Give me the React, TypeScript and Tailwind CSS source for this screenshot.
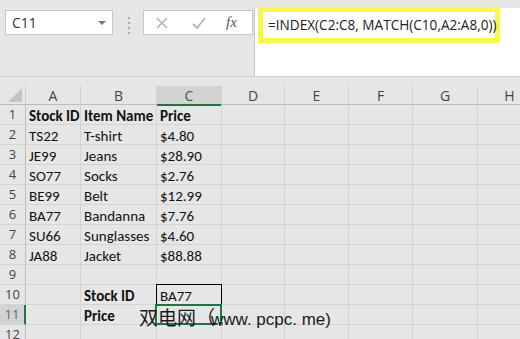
import React from "react";

const COLS = [
  { key: "A", w: "w-[55px]" },
  { key: "B", w: "w-[76px]" },
  { key: "C", w: "w-[65px]" },
  { key: "D", w: "w-[63px]" },
  { key: "E", w: "w-[64px]" },
  { key: "F", w: "w-[64px]" },
  { key: "G", w: "w-[65px]" },
  { key: "H", w: "w-[64px]" },
];

type Row = { a?: string; b?: string; c?: string; bold?: boolean; boldB?: boolean };

const ROWS: Row[] = [
  { a: "Stock ID", b: "Item Name", c: "Price", bold: true },
  { a: "TS22", b: "T-shirt", c: "$4.80" },
  { a: "JE99", b: "Jeans", c: "$28.90" },
  { a: "SO77", b: "Socks", c: "$2.76" },
  { a: "BE99", b: "Belt", c: "$12.99" },
  { a: "BA77", b: "Bandanna", c: "$7.76" },
  { a: "SU66", b: "Sunglasses", c: "$4.60" },
  { a: "JA88", b: "Jacket", c: "$88.88" },
  {},
  { b: "Stock ID", c: "BA77", boldB: true },
  { b: "Price", boldB: true },
  {},
];

const cellFont = "font-['Carlito','Lato',sans-serif] text-[15px]";

function Cell({ w, text, bold, extra }: { w: string; text?: string; bold?: boolean; extra?: React.ReactNode }) {
  return (
    <div
      className={`${w} h-[20px] shrink-0 relative border-r border-b border-[#d4d4d4] pl-[3px] pt-[1px] leading-[20px] whitespace-nowrap text-[#111] ${cellFont} ${bold ? "font-bold" : ""}`}
    >
      {text}
      {extra}
    </div>
  );
}

export default function App() {
  return (
    <div className="w-[520px] h-[339px] overflow-hidden bg-[#e6e6e6] relative">
      {/* formula bar area */}
      <div className="h-[77px] flex items-start border-b border-[#d0d0d0]">
        <div className="ml-[5px] mt-[10px] w-[108px] h-[25px] bg-white border border-[#c6c6c6] flex items-center justify-between pl-[6px] pr-[6px]">
          <span className="font-['Open_Sans',sans-serif] text-[14px] text-[#333]">C11</span>
          <span className="w-0 h-0 border-l-[4px] border-r-[4px] border-t-[4px] border-l-transparent border-r-transparent border-t-[#777]" />
        </div>
        <div className="ml-[15px] mt-[17px] flex flex-col gap-[3px]">
          <span className="w-[2px] h-[2px] bg-[#aaa]" />
          <span className="w-[2px] h-[2px] bg-[#aaa]" />
          <span className="w-[2px] h-[2px] bg-[#aaa]" />
          <span className="w-[2px] h-[2px] bg-[#aaa]" />
        </div>
        <div className="ml-[13px] mt-[10px] w-[110px] h-[25px] bg-white border border-[#c6c6c6] flex items-center">
          <svg width="14" height="14" viewBox="0 0 14 14" className="ml-[11px]">
            <path d="M2 2 L12 12 M12 2 L2 12" stroke="#b4b4b4" strokeWidth="1.6" />
          </svg>
          <svg width="16" height="14" viewBox="0 0 16 14" className="ml-[22px]">
            <path d="M2 8 L6 12 L14 2" stroke="#b4b4b4" strokeWidth="1.8" fill="none" />
          </svg>
          <span className="ml-[19px] font-['Liberation_Serif',serif] italic text-[15px] text-[#555]">fx</span>
        </div>
        <div className="ml-[1px] mt-[8px] flex-1 h-[68px] bg-white border-l border-[#c6c6c6]">
          <div className="-mt-[1px] ml-[3px] w-[242px] h-[36px] border-[5px] border-[#f8f84a] pl-[5px] flex items-center">
            <span className="font-['Open_Sans',sans-serif] text-[13.6px] text-[#222] whitespace-nowrap">
              =INDEX(C2:C8, MATCH(C10,A2:A8,0))
            </span>
          </div>
        </div>
      </div>

      <div className="h-[9px]" />

      {/* column header */}
      <div className="flex h-[19px] border-b border-[#bdbdbd]">
        <div className="w-[26px] shrink-0 border-r border-[#cfcfcf] relative">
          <svg width="14" height="14" viewBox="0 0 14 14" className="absolute right-[3px] bottom-[2px]">
            <path d="M14 0 L14 14 L0 14 Z" fill="#c3c3c3" />
          </svg>
        </div>
        {COLS.map((c) => (
          <div
            key={c.key}
            className={`${c.w} shrink-0 border-r border-[#cfcfcf] flex items-center justify-center font-['Open_Sans',sans-serif] text-[14px] ${
              c.key === "C" ? "bg-[#d3d3d3] border-b-2 border-b-[#217346] text-[#555] h-[20px]" : "text-[#444]"
            }`}
          >
            {c.key}
          </div>
        ))}
      </div>

      {/* rows */}
      {ROWS.map((r, i) => {
        const n = i + 1;
        const sel = n === 11;
        return (
          <div key={n} className="flex">
            <div
              className={`w-[26px] h-[20px] shrink-0 border-b border-[#d4d4d4] flex items-center justify-center font-['Open_Sans',sans-serif] text-[13px] ${
                sel ? "bg-[#d3d3d3] border-r-2 border-r-[#217346] text-[#666]" : "bg-[#e6e6e6] border-r border-r-[#bdbdbd] text-[#444]"
              }`}
            >
              {n}
            </div>
            <Cell w="w-[55px]" text={r.a} bold={r.bold} />
            <Cell w="w-[76px]" text={r.b} bold={r.bold || r.boldB} />
            <Cell
              w="w-[65px]"
              text={r.c}
              bold={r.bold}
              extra={
                n === 10 ? (
                  <div className="absolute -left-[1px] -top-[1px] -right-[1px] -bottom-[1px] border border-black" />
                ) : sel ? (
                  <div className="absolute -left-[2px] -top-[1px] -right-[1px] -bottom-[1px] border-2 border-[#217346]">
                    <div className="absolute -right-[4px] -bottom-[4px] w-[6px] h-[6px] bg-[#217346] border border-white" />
                  </div>
                ) : null
              }
            />
            {COLS.slice(3).map((c) => (
              <Cell key={c.key} w={c.w} />
            ))}
          </div>
        );
      })}

      {/* watermark */}
      <div className="absolute left-[139px] top-[305px] leading-[24px] text-[#1a1a1a] whitespace-nowrap flex items-baseline">
        <span className="font-['Noto_Sans_CJK_SC',sans-serif] text-[19px]">双电网（</span>
        <span className="font-['Liberation_Sans',sans-serif] text-[17px] -ml-[4px]">www. pcpc. me)</span>
      </div>
    </div>
  );
}
